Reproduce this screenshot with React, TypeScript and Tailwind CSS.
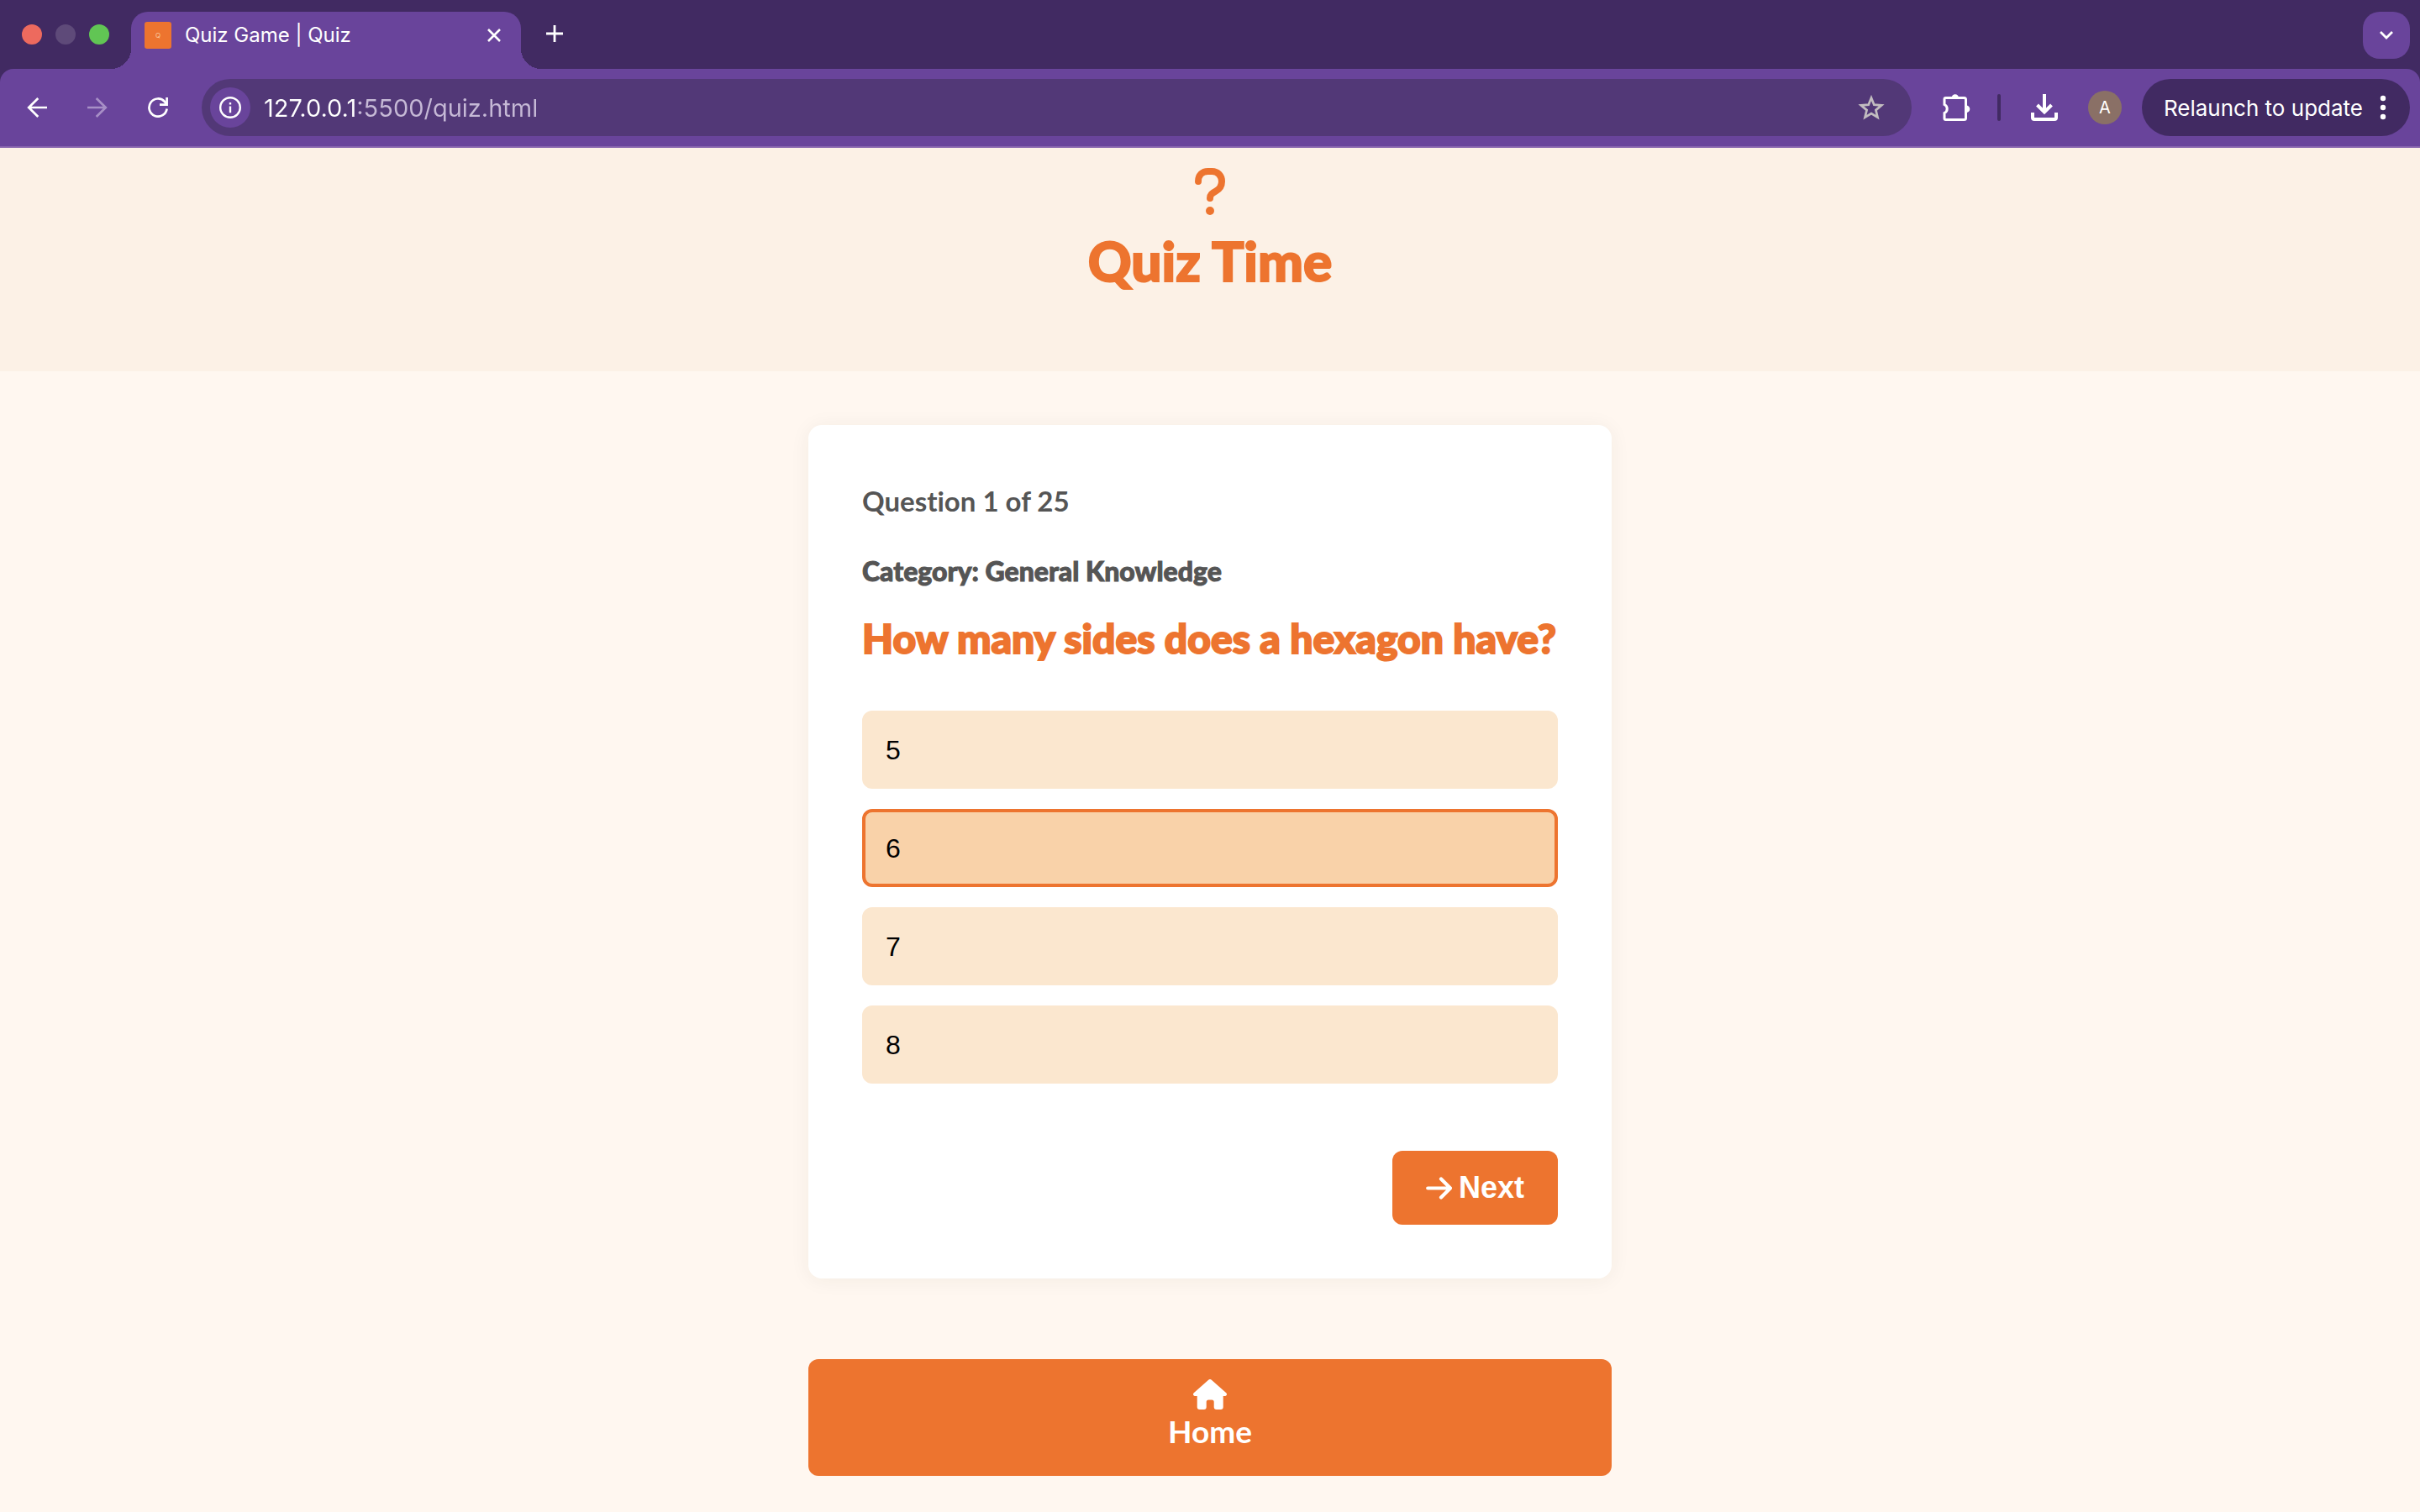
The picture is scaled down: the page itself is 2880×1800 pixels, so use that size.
import React, { useState } from "react";

const OPTIONS = ["5", "6", "7", "8"];

function BackIcon({ flipped = false }: { flipped?: boolean }) {
  return (
    <svg viewBox="0 0 24 24" className={flipped ? "size-6 rotate-180" : "size-6"} fill="none" stroke="currentColor" strokeWidth="2.7" aria-hidden="true">
      <path d="M24 12H2M13.3 1 2.2 12l11.1 11" />
    </svg>
  );
}

function ReloadIcon() {
  return (
    <svg viewBox="0 0 24 24" className="size-6" fill="none" stroke="currentColor" strokeWidth="2.7" aria-hidden="true">
      <path d="M22.6 13.5A10.6 10.6 0 1 1 20 5l2 3" />
      <path d="M22.6 0v8.6H14" />
    </svg>
  );
}

function TabStrip() {
  return (
    <div className="flex h-[82px] items-start bg-[#412A62] pr-3">
      <div className="flex h-full w-[156px] shrink-0 items-center gap-4 pl-[26px]">
        <span className="size-6 rounded-full bg-[#ED6A5E]" />
        <span className="size-6 rounded-full bg-[#5E4A79]" />
        <span className="size-6 rounded-full bg-[#61C554]" />
      </div>
      <div className="relative mt-3.5 flex h-[68px] w-[464px] items-start rounded-t-[20px] bg-[#69449B] px-4 pt-3">
        <span className="absolute bottom-0 -left-6 size-6 bg-[radial-gradient(circle_at_0_0,transparent_24px,#69449B_24px)]" />
        <span className="absolute -right-6 bottom-0 size-6 bg-[radial-gradient(circle_at_100%_0,transparent_24px,#69449B_24px)]" />
        <span className="flex size-8 items-center justify-center rounded-[3px] bg-[#ED742F] text-[8px] text-[#F9C79F]">Q</span>
        <span className="ml-4 flex-1 text-2xl leading-8 text-white">Quiz Game | Quiz</span>
        <button aria-label="Close tab" className="flex size-8 items-center justify-center text-white">
          <svg viewBox="0 0 16 16" className="size-4" fill="none" stroke="currentColor" strokeWidth="2.6" aria-hidden="true">
            <path d="m1 1 14 14M15 1 1 15" />
          </svg>
        </button>
      </div>
      <button aria-label="New tab" className="mt-6 ml-6 flex size-8 items-center justify-center text-white">
        <svg viewBox="0 0 20 20" className="size-5" fill="none" stroke="currentColor" strokeWidth="2.8" aria-hidden="true">
          <path d="M10 0v20M0 10h20" />
        </svg>
      </button>
      <button aria-label="Search tabs" className="mt-3.5 ml-auto flex size-14 items-center justify-center rounded-[20px] bg-[#69449B] text-white">
        <svg viewBox="0 0 16 10" className="h-2.5 w-4" fill="none" stroke="currentColor" strokeWidth="2.8" aria-hidden="true">
          <path d="m1 1 7 7 7-7" />
        </svg>
      </button>
    </div>
  );
}

function Toolbar() {
  return (
    <div className="bg-[#412A62]">
      <div className="flex h-[94px] items-center rounded-t-2xl border-b-2 border-[#8763AE] bg-[#69449B] pr-3 pl-8 text-white">
        <button aria-label="Back"><BackIcon /></button>
        <button aria-label="Forward" className="ml-12 text-[#A78FC6]"><BackIcon flipped /></button>
        <button aria-label="Reload" className="ml-12"><ReloadIcon /></button>
        <div className="ml-10 flex h-[68px] flex-1 items-center rounded-full bg-[#523877] pr-8 pl-2.5">
          <button aria-label="Site information" className="flex size-12 items-center justify-center rounded-full bg-[#69449B]">
            <svg viewBox="0 0 26 26" className="size-[26px]" fill="none" stroke="currentColor" strokeWidth="2.4" aria-hidden="true">
              <circle cx="13" cy="13" r="11.8" />
              <path d="M13 11.6v7.6M13 7v2.6" />
            </svg>
          </button>
          <input
            aria-label="Address"
            defaultValue="127.0.0.1:5500/quiz.html"
            className="ml-4 h-12 min-w-0 flex-1 bg-linear-to-r from-white from-[112px] to-[#C6B9D6] to-[112px] bg-clip-text text-[29px] text-transparent outline-none"
          />
          <button aria-label="Bookmark this tab" className="text-[#C2BDC0]">
            <svg viewBox="0 0 32 30" className="h-[30px] w-8" fill="none" stroke="currentColor" strokeWidth="2.7" aria-hidden="true">
              <path d="m16 3.5 3.3 8.2 8.9.7-6.8 5.7 2.1 8.6-7.5-4.7-7.5 4.7 2.1-8.6-6.8-5.7 8.9-.7z" />
            </svg>
          </button>
        </div>
        <button aria-label="Extensions" className="ml-9">
          <svg viewBox="0 0 34 34" className="size-[34px]" aria-hidden="true">
            <path d="M4.5 7h22a2 2 0 0 1 2 2v22a2 2 0 0 1-2 2h-22a1.500 1.500 0 0 1-1.500-1.500v-6.500a5.500 5.500 0 0 0 0-10V8.500A1.500 1.500 0 0 1 4.500 7z" transform="translate(0 -1.500)" fill="none" stroke="currentColor" strokeWidth="3" />
            <path d="M11.500 5.500a4.300 4.300 0 0 1 8.600 0zM29 14.500a4.300 4.300 0 0 1 0 8.600z" fill="currentColor" />
          </svg>
        </button>
        <span className="ml-8 h-8 w-1 rounded-full bg-[#412A62]" />
        <button aria-label="Downloads" className="ml-9">
          <svg viewBox="0 0 32 32" className="size-8" fill="none" stroke="currentColor" strokeWidth="4" aria-hidden="true">
            <path d="M16 0v21M7.500 13l8.500 8.500 8.500-8.500" />
            <path d="M2 22v6a2 2 0 0 0 2 2h24a2 2 0 0 0 2-2v-6" />
          </svg>
        </button>
        <button aria-label="Profile" className="ml-9 size-10 rounded-full bg-[#8A7066] text-xl">A</button>
        <button className="ml-6 flex h-[68px] items-center rounded-full bg-[#412A62] pr-7 pl-[26px] text-[26px]">
          Relaunch to update
          <svg viewBox="0 0 8 30" className="ml-5 h-[30px] w-2" fill="currentColor" aria-hidden="true">
            <circle cx="4" cy="4" r="3.200" />
            <circle cx="4" cy="15" r="3.200" />
            <circle cx="4" cy="26" r="3.200" />
          </svg>
        </button>
      </div>
    </div>
  );
}

function PageHeader() {
  return (
    <header className="flex flex-col items-center bg-[#FCF1E6] pt-6 pb-[92px] text-[#ED742F]">
      <svg viewBox="0 0 36 56" className="h-14 w-9" aria-hidden="true">
        <path d="M4 16C4 8.500 9 4 15.500 4h5C27 4 32 9 32 16c0 5-2.500 9-7 11.500C20.500 30 18 31.500 18 36" fill="none" stroke="currentColor" strokeWidth="8" strokeLinecap="round" />
        <circle cx="18" cy="51" r="5" fill="currentColor" />
      </svg>
      <h1 className="mt-4 text-[64px] leading-[78px] font-black [-webkit-text-stroke:2px_#ED742F]">Quiz Time</h1>
    </header>
  );
}

function QuizCard() {
  const [selected, setSelected] = useState("6");
  return (
    <section className="rounded-2xl bg-white p-16 shadow-[0_2px_24px_rgba(50,50,0,0.06)]">
      <p className="mt-1 text-[33px] leading-[44px] font-bold text-[#555555] [font-variant-ligatures:none]">Question 1 of 25</p>
      <p className="mt-10 text-[32px] leading-[44px] font-black text-[#555555] [-webkit-text-stroke:1px_#555555]">Category: General Knowledge</p>
      <h2 className="mt-7 text-[48px] leading-[60px] font-black whitespace-nowrap text-[#ED742F] [-webkit-text-stroke:2px_#ED742F]">How many sides does a hexagon have?</h2>
      <div className="mt-14 flex flex-col gap-6 font-['Liberation_Sans',Arial,sans-serif]">
        {OPTIONS.map((option) => (
          <button
            key={option}
            aria-pressed={selected === option}
            onClick={() => setSelected(option)}
            className={
              selected === option
                ? "h-[93px] rounded-xl border-4 border-[#ED742F] bg-[#F9D2A9] px-6 text-left text-[32px] text-black"
                : "h-[93px] rounded-xl border-4 border-[#FBE7CF] bg-[#FBE7CF] px-6 text-left text-[32px] text-black"
            }
          >
            {option}
          </button>
        ))}
      </div>
      <div className="mt-20 flex justify-end">
        <button className="flex h-[88px] items-center gap-2 rounded-xl bg-[#ED742F] px-10 font-['Liberation_Sans',Arial,sans-serif] text-[36px] font-bold text-white">
          <svg viewBox="0 0 31 27" className="h-[27px] w-[31px]" fill="none" stroke="currentColor" strokeWidth="4.200" strokeLinecap="round" strokeLinejoin="round" aria-hidden="true">
            <path d="M2.200 13.500h26M18 2.500l11 11-11 11" />
          </svg>
          Next
        </button>
      </div>
    </section>
  );
}

export default function App() {
  return (
    <div className="flex min-h-screen flex-col bg-[#FFF7F0] font-['Inter',sans-serif]">
      <TabStrip />
      <Toolbar />
      <div className="font-['Lato',sans-serif]">
        <PageHeader />
        <main className="mx-auto mt-16 flex w-[956px] max-w-full flex-col gap-24">
          <QuizCard />
          <a href="#home" className="flex h-[139px] flex-col items-center rounded-xl bg-[#ED742F] pt-6 text-white">
            <svg viewBox="0 0 40 36" className="h-9 w-10" fill="currentColor" aria-hidden="true">
              <path d="M18.500.6a2.300 2.300 0 0 1 3 0l17.800 15.700c1.400 1.300.6 3.700-1.300 3.700h-2.300v13a3 3 0 0 1-3 3h-5a3 3 0 0 1-3-3v-6a2.500 2.500 0 0 0-2.500-2.500h-4a2.500 2.500 0 0 0-2.500 2.500v6a3 3 0 0 1-3 3h-5a3 3 0 0 1-3-3V20H2C.1 20-.7 17.600.7 16.300z" />
            </svg>
            <span className="mt-1 text-[37px] leading-11 font-bold">Home</span>
          </a>
        </main>
      </div>
    </div>
  );
}
